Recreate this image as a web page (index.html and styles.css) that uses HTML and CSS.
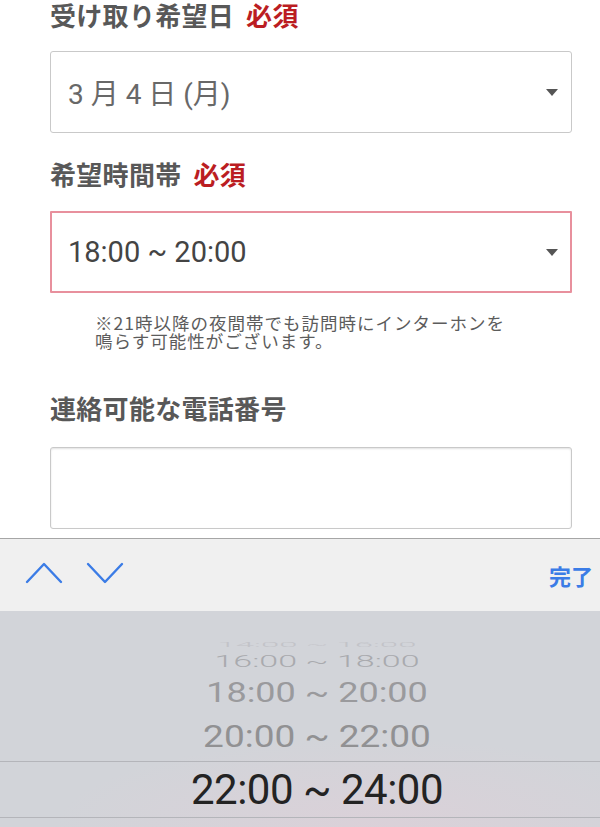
FILE: index.html
```html
<!DOCTYPE html>
<html lang="ja">

<head>
    <meta charset="UTF-8">
    <meta name="viewport" content="width=device-width, initial-scale=1.0">
    <title>お届け日時の指定</title>

    <link rel="stylesheet" href="styles.css">
</head>

<body>
    <form class="delivery-form">
        <div class="field">
            <label class="field-label">受け取り希望日<span class="required">必須</span></label>
            <div class="select-box">
                <span class="select-value select-date">3 月 4 日 (月)</span>
                <span class="select-caret"></span>
            </div>
        </div>

        <div class="field field-time">
            <label class="field-label">希望時間帯<span class="required">必須</span></label>
            <div class="select-box is-focused">
                <span class="select-value">18:00 ~ 20:00</span>
                <span class="select-caret"></span>
            </div>
            <p class="field-note">※21時以降の夜間帯でも訪問時にインターホンを<br>鳴らす可能性がございます。</p>
        </div>

        <div class="field field-phone">
            <label class="field-label">連絡可能な電話番号</label>
            <div class="text-box"></div>
        </div>
    </form>

    <!-- keyboard accessory + wheel picker -->
    <div class="input-accessory">
        <div class="accessory-nav">
            <svg class="nav-arrows" width="100" height="24" viewBox="0 0 100 24">
                <polyline points="2,21 19,3 36,21" />
                <polyline points="63,3 80,21 97,3" />
            </svg>
        </div>
        <button class="done-btn" type="button">完了</button>
    </div>

    <div class="wheel-picker">
        <div class="wheel-row row-far">14:00 ~ 16:00</div>
        <div class="wheel-row row-3">16:00 ~ 18:00</div>
        <div class="wheel-row row-2">18:00 ~ 20:00</div>
        <div class="wheel-row row-1">20:00 ~ 22:00</div>
        <div class="wheel-row row-selected">22:00 ~ 24:00</div>
    </div>
</body>

</html>
```

FILE: styles.css
```css
/* Basic reset */
* {
    margin: 0;
    padding: 0;
    box-sizing: border-box;
}

body {
    width: 600px;
    height: 827px;
    overflow: hidden;
    background: #fff;
    font-family: 'Noto Sans CJK JP', sans-serif;
    color: #555;
}

:root {
    --label-color: #585858;
    --required-color: #bb1d22;
    --box-border: #c9c9c9;
    --focus-border: #e8909d;
    --ios-blue: #3b7ce6;
}

/* Form */
.delivery-form {
    padding: 0 28px 0 50px;
}

.field-label {
    display: block;
    font-size: 26px;
    font-weight: 700;
    line-height: 30px;
    letter-spacing: 0.3px;
    color: var(--label-color);
}

.required {
    margin-left: 12px;
    color: var(--required-color);
}

.select-box,
.text-box {
    height: 82px;
    margin-top: 21px;
    border: 1px solid var(--box-border);
    border-radius: 3px;
    background: #fff;
}

.select-box {
    display: flex;
    align-items: center;
    justify-content: space-between;
    padding: 0 13px 0 17px;
}

.select-box.is-focused {
    margin-top: 22px;
    border: 2px solid var(--focus-border);
    border-radius: 1px;
    padding-left: 16px;
    padding-right: 12px;
}

.select-value {
    font-family: Roboto, 'Noto Sans CJK JP', sans-serif;
    font-size: 29px;
    color: #444;
}

.select-date {
    font-size: 28px;
    color: #686868;
}

.select-caret {
    width: 0;
    height: 0;
    border-left: 6.5px solid transparent;
    border-right: 6.5px solid transparent;
    border-top: 7px solid #555;
}

.field-time {
    margin-top: 26px;
}

.field-note {
    margin-top: 21px;
    padding-left: 45px;
    font-size: 17.5px;
    line-height: 17.5px;
    letter-spacing: 1px;
    color: #5c5c5c;
}

.field-phone {
    margin-top: 44px;
}

.text-box {
    margin-top: 24px;
    box-shadow: inset 0 1px 2px rgba(0, 0, 0, 0.12);
}

/* Accessory bar above the picker */
.input-accessory {
    display: flex;
    align-items: center;
    justify-content: space-between;
    height: 73px;
    margin-top: 9px;
    padding: 0 7px 0 25px;
    background: #f0f0f0;
    border-top: 1px solid #a6a6a6;
}

.nav-arrows polyline {
    fill: none;
    stroke: var(--ios-blue);
    stroke-width: 2.4;
    stroke-linecap: round;
    stroke-linejoin: round;
}

.done-btn {
    border: none;
    background: none;
    font-family: 'Noto Sans CJK JP', sans-serif;
    font-size: 22px;
    font-weight: 700;
    color: var(--ios-blue);
}

/* Wheel picker */
.wheel-picker {
    height: 217px;
    padding-top: 29px;
    background:
        radial-gradient(ellipse 320px 90px at 62% 100%, rgba(226, 206, 216, 0.55), rgba(226, 206, 216, 0)),
        #d2d4d9;
    font-family: Roboto, 'Liberation Sans', sans-serif;
    overflow: hidden;
}

.wheel-row {
    display: flex;
    align-items: center;
    justify-content: center;
    padding-left: 34px;
    white-space: nowrap;
}

.row-far {
    height: 9px;
    font-size: 33px;
    font-weight: 300;
    color: #c2c3c8;
    transform: scaleY(0.2);
}

.row-3 {
    height: 24px;
    font-size: 34px;
    font-weight: 300;
    color: #a9aaae;
    transform: scaleY(0.5);
}

.row-2 {
    height: 39px;
    font-size: 36px;
    color: #9a9a9d;
    transform: scaleY(0.75);
}

.row-1 {
    height: 49px;
    font-size: 37px;
    color: #919193;
    transform: scaleY(0.84);
}

.row-selected {
    height: 57px;
    font-size: 42px;
    letter-spacing: -0.5px;
    color: #232323;
    border-top: 1px solid #b4b5ba;
    border-bottom: 1px solid #b4b5ba;
}
```
